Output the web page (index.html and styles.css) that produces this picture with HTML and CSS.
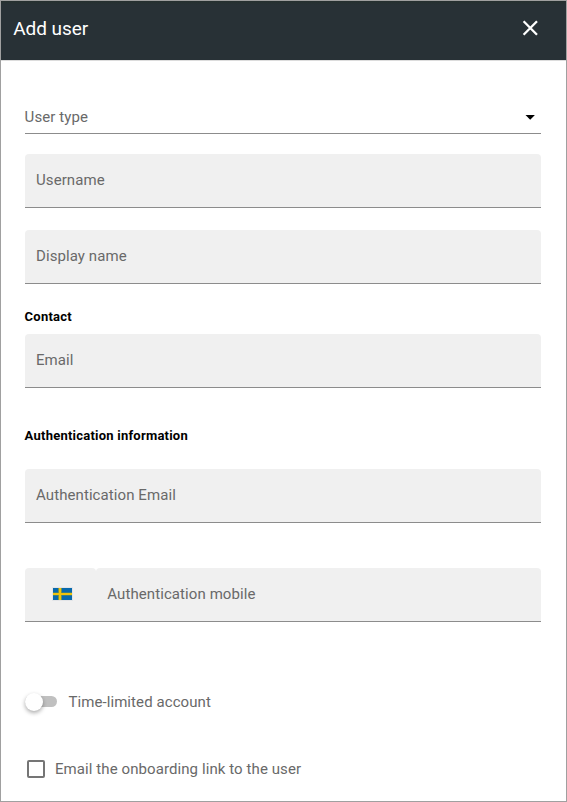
FILE: index.html
```html
<!DOCTYPE html>
<html lang="en">
<head>
<meta charset="utf-8">
<title>Add user</title>
<link rel="stylesheet" href="styles.css">
</head>
<body>
<main class="dialog">
  <header class="header">
    <h1 class="title">Add user</h1>
    <svg class="close" width="16" height="16" viewBox="0 0 16 16"><path d="M1.6 1.3 15 14.7M15 1.3 1.6 14.7" stroke="#fff" stroke-width="2.3" fill="none"/></svg>
  </header>
  <form class="form">
    <div class="select"><span>User type</span><svg class="caret" width="10" height="5" viewBox="0 0 10 5"><path d="M.5 0h9.4L5.2 4.8z"/></svg></div>
    <div class="field username">Username</div>
    <div class="field display-name">Display name</div>
    <h2 class="section contact">Contact</h2>
    <div class="field email">Email</div>
    <h2 class="section auth">Authentication information</h2>
    <div class="field auth-email">Authentication Email</div>
    <div class="phone">
      <div class="field country">
        <svg class="flag" width="21" height="14" viewBox="0 0 21 14"><path fill="#e3e5e8" d="M0 0h21v14H0z"/><path fill="#0869ac" d="M1 1h19v12H1z"/><path fill="#6f9153" d="M6 1h4v12H6zM1 5.5h19v3H1z"/><path fill="#efc30b" d="M7 1h2v12H7zM1 6h19v2H1z"/></svg>
      </div>
      <div class="field mobile">Authentication mobile</div>
    </div>
    <div class="switch-row"><span class="track"><i class="thumb"></i></span><span>Time-limited account</span></div>
    <div class="check-row"><i class="box"></i><span>Email the onboarding link to the user</span></div>
  </form>
</main>
</body>
</html>
```
FILE: styles.css
```css
* { box-sizing: border-box; }
body { margin: 0; background: #fff; font-family: Roboto, sans-serif; font-size: 15px; letter-spacing: .085px; color: #696969; }
.dialog { height: 802px; border: 1px solid #a0a0a0; overflow: hidden; }
.header { height: 60px; padding: 0 28px 5px 12.2px; display: flex; align-items: center; justify-content: space-between; background: linear-gradient(#26302f, #283136 4px); border-bottom: 1px solid #dcdcdc; color: #fff; }
.title { margin: 0; font-size: 19px; letter-spacing: -.04px; font-weight: 400; }
.form { padding: 40px 25px 0 24px; display: flex; flex-direction: column; }
.select { height: 33px; border-bottom: 1px solid #8c8c8c; display: flex; align-items: center; justify-content: space-between; padding-right: 6px; }
.select span { margin-left: -.4px; }
.caret { margin-top: 1px; }
.field { height: 54px; padding: 0 11px 2px; display: flex; align-items: center; background: #f0f0f0; border-bottom: 1px solid #8c8c8c; border-radius: 4px 4px 0 0; }
.username { margin-top: 20px; }
.display-name { margin-top: 22px; }
.section { margin: 0 0 0 -.4px; font-size: 13px; letter-spacing: .23px; line-height: 16px; font-weight: 700; color: #000; }
.contact { margin-top: 25px; }
.email { margin-top: 9px; }
.auth { margin-top: 40px; }
.auth-email { margin-top: 25px; }
.phone { margin-top: 45px; display: flex; }
.country { width: 71px; padding: 0 0 2px 27px; }
.mobile { flex: 1; padding-left: 11.3px; }
.switch-row { margin-top: 69px; height: 21px; display: flex; align-items: center; gap: 11.4px; }
.track { width: 32px; height: 11px; border-radius: 6px; background: #c0c0c0; display: flex; align-items: center; }
.thumb { width: 18px; height: 18px; margin-left: -.5px; border-radius: 50%; background: #fff; box-shadow: 0 2px 4px #0005; }
.check-row { margin-top: 47px; height: 20px; display: flex; align-items: center; padding-left: 2px; gap: 10px; }
.box { width: 18px; height: 18px; border: 2px solid #757575; border-radius: 2px; }
```
